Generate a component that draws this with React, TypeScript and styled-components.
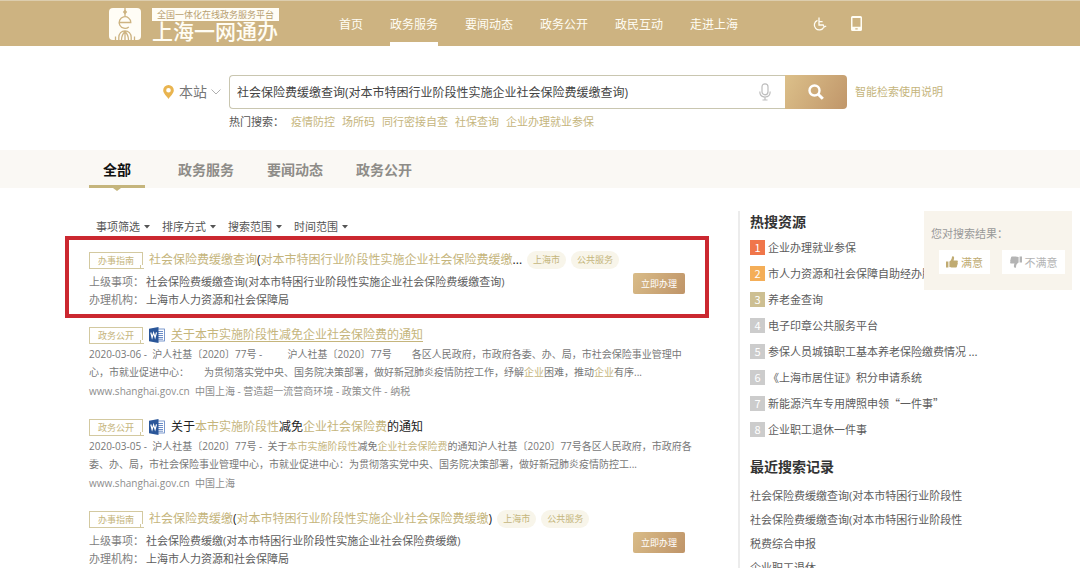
import React from 'react';
import styled, { createGlobalStyle, css } from 'styled-components';

const gold = '#c5b57c';
const bar = '#cdb381';

const GlobalStyle = createGlobalStyle`
  * { box-sizing: border-box; }
  body {
    margin: 0;
    background: #fff;
    color: #6a6a6a;
    font-family: "Open Sans", "Noto Sans CJK SC", sans-serif;
    font-size: 11px;
    line-height: 18px;
  }
  a { color: inherit; text-decoration: none; }
  h1, h2, h3, p, ol, ul, dl, dd { margin: 0; padding: 0; }
  ol, ul { list-style: none; }
  button, input, select { font-family: inherit; }
`;

const Page = styled.div`
  position: relative;
`;

/* header */
const Header = styled.header`
  background: ${bar};
  border-top: 1px solid #dccdae;
  color: #fffdf4;
`;
const HeaderInner = styled.div`
  display: flex;
  align-items: stretch;
  max-width: 902px;
  height: 45px;
  margin: 0 auto;
  padding: 0 129px 0 20px;
`;
const Brand = styled.a`
  display: flex;
  align-items: flex-start;
  gap: 11px;
  padding-top: 7px;
`;
const BrandText = styled.span`
  display: flex;
  flex-direction: column;
`;
const Slogan = styled.span`
  padding: 0 5px;
  background: #fffdf6;
  color: #b8a070;
  font-size: 9px;
  line-height: 13px;
  white-space: nowrap;
`;
const BrandName = styled.span`
  font-size: 21px;
  font-weight: 500;
  line-height: 20px;
  white-space: nowrap;
`;
const Nav = styled.nav`
  display: flex;
  gap: 27px;
  margin-left: 60px;
`;
const NavLink = styled.a<{ $active?: boolean }>`
  padding-top: 15px;
  border-bottom: 4px solid ${p => (p.$active ? '#fff' : 'transparent')};
  font-size: 12px;
  white-space: nowrap;
`;
const HeaderTools = styled.div`
  display: flex;
  align-items: center;
  gap: 24px;
  margin-left: auto;
`;
const IconButton = styled.button`
  display: flex;
  padding: 0;
  border: 0;
  background: none;
  color: inherit;
`;

/* search */
const SearchArea = styled.section`
  max-width: 902px;
  margin: 0 auto;
  padding: 29px 0 19px 74px;
`;
const SearchRow = styled.form`
  display: flex;
  align-items: center;
`;
const Scope = styled.label`
  display: flex;
  align-items: center;
  width: 66px;
`;
const PlainSelect = styled.select<{ $size: number }>`
  appearance: none;
  padding: 0;
  border: 0;
  background: none;
  color: ${p => (p.$size > 11 ? '#777' : '#555')};
  font-size: ${p => p.$size}px;
  line-height: 18px;
`;
const ScopeSelect = styled(PlainSelect)`
  margin: 0 4px 0 5px;
`;
const SearchBox = styled.div`
  display: flex;
  flex: 0 1 618px;
  height: 34px;
`;
const Field = styled.div`
  display: flex;
  flex: 1;
  align-items: center;
  padding: 0 14px 0 7px;
  border: 1px solid #c9c6b0;
  border-right: 0;
  border-radius: 4px 0 0 4px;
`;
const SearchInput = styled.input`
  flex: 1;
  min-width: 0;
  padding: 0;
  border: 0;
  outline: 0;
  background: none;
  color: #444;
  font-size: 12px;
`;
const SearchButton = styled.button`
  display: flex;
  align-items: center;
  justify-content: center;
  width: 62px;
  border: 0;
  border-radius: 0 4px 4px 0;
  background: linear-gradient(120deg, #dcc08a, #c0966a);
`;
const HelpLink = styled.a`
  margin-left: 8px;
  color: ${gold};
  white-space: nowrap;
`;
const HotWords = styled.div`
  display: flex;
  gap: 7px;
  padding: 4px 0 0 66px;
  color: ${gold};
  white-space: nowrap;
`;
const HotLabel = styled.span`
  width: 55px;
  color: #555;
`;

/* tabs */
const TabBand = styled.div`
  background: #faf8f4;
`;
const Tabs = styled.nav`
  display: flex;
  gap: 33px;
  max-width: 902px;
  height: 38px;
  margin: 0 auto;
`;
const Tab = styled.a<{ $active?: boolean }>`
  position: relative;
  padding-top: 11px;
  color: #8e8c88;
  font-size: 14px;
  font-weight: 700;
  white-space: nowrap;
  ${p => p.$active && css`
    padding-right: 14px;
    padding-left: 14px;
    border-bottom: 3px solid ${gold};
    color: #111;
    &::after {
      content: '';
      position: absolute;
      top: 100%;
      left: 50%;
      margin: 3px 0 0 -4px;
      border: 4px solid transparent;
      border-top: 3px solid ${gold};
      border-bottom: 0;
    }
  `}
`;

/* body */
const Body = styled.div`
  display: flex;
  align-items: stretch;
  max-width: 902px;
  margin: 0 auto;
  padding-top: 23px;
`;
const Main = styled.main`
  flex: 1;
  min-width: 0;
  padding: 7px 45px 0 0;
`;
const Filters = styled.div`
  display: flex;
  gap: 11px;
  padding-left: 7px;
`;
const Filter = styled.label`
  display: flex;
  align-items: center;
  gap: 3px;
`;
const Result = styled.article<{ $framed?: boolean }>`
  margin-bottom: 16px;
  ${p => p.$framed && css`
    margin: 0 -16px 7px -24px;
    padding: 10px 12px 5px 20px;
    border: 4px solid #cb2830;
  `}
`;
const ResultHead = styled.div`
  display: flex;
  align-items: center;
  height: 20px;
  white-space: nowrap;
`;
const Tag = styled.span`
  position: relative;
  width: 54px;
  height: 17px;
  margin-right: 6px;
  border: 1px solid #d3c9a0;
  color: ${gold};
  font-size: 9px;
  line-height: 15px;
  text-align: center;
  &::after {
    content: '';
    position: absolute;
    right: -2px;
    bottom: -1px;
    width: 3px;
    height: 3px;
    border-bottom: 1px solid #d3c9a0;
    border-left: 1px solid #d3c9a0;
    background: #fff;
  }
`;
const Title = styled.h3<{ $visited?: boolean }>`
  color: #222;
  font-size: 12px;
  font-weight: 400;
  a { text-decoration: ${p => (p.$visited ? 'underline' : 'none')}; text-underline-offset: 2px; }
  ${p => p.$visited && css`color: ${gold};`}
`;
const Mark = styled.em`
  color: ${gold};
  font-style: normal;
`;
const Chip = styled.span`
  margin-left: 5px;
  padding: 0 6px;
  border-radius: 9px;
  background: #f8f5ea;
  color: ${gold};
  font-size: 9px;
`;
const WordIcon = styled.svg`
  margin-right: 6px;
`;
const ServiceBody = styled.div`
  display: flex;
  align-items: flex-start;
  justify-content: space-between;
  padding: 3px 8px 0 0;
`;
const Facts = styled.dl`
  display: grid;
  grid-template-columns: 57px auto;
  color: #5c5c5c;
  white-space: nowrap;
  dt { color: #808080; }
`;
const ApplyButton = styled.button`
  width: 52px;
  height: 21px;
  padding: 0;
  border: 0;
  border-radius: 2px;
  background: linear-gradient(120deg, #d9bc88, #bf9468);
  color: #fff;
  font-size: 9px;
`;
const Summary = styled.p`
  color: #777;
  font-size: 10px;
  white-space: nowrap;
`;
const Source = styled.p`
  color: #8d8d8d;
  font-size: 10px;
  line-height: 20px;
`;

/* side column */
const Side = styled.aside`
  width: 253px;
  padding-left: 10px;
  border-left: 2px solid #ececec;
`;
const SideTitle = styled.h2`
  padding-bottom: 2px;
  color: #333;
  font-size: 14px;
  font-weight: 700;
  line-height: 21px;
`;
const HotList = styled.ol`
  padding-bottom: 14px;
`;
const HotItem = styled.li`
  display: flex;
  align-items: center;
  gap: 3px;
  height: 26px;
  color: #5c5c5c;
  font-family: "Noto Sans CJK SC", sans-serif;
  white-space: nowrap;
`;
const Rank = styled.span<{ $color: string }>`
  width: 15px;
  height: 15px;
  background: ${p => p.$color};
  color: #fff;
  line-height: 15px;
  text-align: center;
`;
const RecentList = styled.ul`
  padding-top: 5px;
  color: #5c5c5c;
  line-height: 24px;
  white-space: nowrap;
`;

/* feedback card floating over the side column */
const Feedback = styled.section`
  position: absolute;
  top: 211px;
  right: 8px;
  width: 148px;
  padding: 14px 7px 16px;
  background: #f8f4ec;
  color: #999;
`;
const Votes = styled.div`
  display: flex;
  gap: 12px;
  padding: 7px 0 0 8px;
`;
const Vote = styled.button<{ $up?: boolean }>`
  display: flex;
  align-items: center;
  justify-content: center;
  gap: 3px;
  width: ${p => (p.$up ? 51 : 63)}px;
  height: 24px;
  padding: 0;
  border: 0;
  background: #fff;
  color: ${p => (p.$up ? '#c0ab72' : '#b4b4b4')};
  font-size: 11px;
  white-space: nowrap;
`;
const Flip = styled.svg`
  transform: rotate(180deg);
`;

const Caret = () => (
  <svg width="8" height="4" viewBox="0 0 8 4" aria-hidden="true"><path d="M1 0h6L4 3.6z" fill="#555" /></svg>
);

const thumbPath = 'M0 5.5h2.4v6H0zM3.4 5.6C5 4.600 5.900 3 6 .8c.1-.9 1.900-.8 2.100.8.1 1-.2 2-.6 3h3.300c1.100 0 1.400 1.200.7 1.800.6.500.5 1.400-.2 1.700.5.6.2 1.400-.4 1.600.3.800-.1 1.800-1.100 1.800H6.200c-1.200 0-1.700-.5-2.800-.6z';

const Word = () => (
  <WordIcon width="16" height="16" viewBox="0 0 16 16" role="img" aria-label="Word">
    <rect x="8" y="2" width="7.500" height="12" fill="#fff" stroke="#5a7fc0" strokeWidth=".8" />
    <path d="M9 4.500h5M9 6.500h5M9 8.500h5M9 10.500h5M9 12.200h5" stroke="#5a7fc0" strokeWidth=".9" />
    <path d="M0 1.800 9.500 0v16L0 14.200z" fill="#2a5699" />
    <path d="m1.800 5.500 1.300 5 1.500-4.600 1.500 4.600 1.400-5.200" fill="none" stroke="#fff" strokeWidth="1.200" />
  </WordIcon>
);

const Logo = () => (
  <svg width="32" height="32" viewBox="0 0 32 32" aria-hidden="true">
    <rect width="32" height="32" rx="4" fill="#fffdf6" />
    <path d="M16 1.500 18.200 4 16 6.500 13.800 4z" fill={bar} />
    <g fill="none" stroke={bar} strokeWidth="1.300">
      <path d="M16 0v8" />
      <path d="M10.200 14.500H21.800A5.800 5.800 0 1 0 19.800 18.900" />
      <path d="M16 22.500V32M9.800 32v-2.500c0-4 2.700-6.700 6.200-6.700s6.200 2.700 6.200 6.700V32M12.500 32c0-3 1-6 3.500-8.500 2.500 2.500 3.500 5.500 3.500 8.500M6.500 28.500V32M25.500 28.500V32" />
    </g>
  </svg>
);

const filters = ['事项筛选', '排序方式', '搜索范围', '时间范围'];
const hotWords = ['疫情防控', '场所码', '同行密接自查', '社保查询', '企业办理就业参保'];
const rankColors = ['#f0764a', '#f4ae58', '#cdbf92'];
const hot = [
  '企业办理就业参保',
  '市人力资源和社会保障自助经办服务',
  '养老金查询',
  '电子印章公共服务平台',
  '参保人员城镇职工基本养老保险缴费情况 ...',
  '《上海市居住证》积分申请系统',
  '新能源汽车专用牌照申领“一件事”',
  '企业职工退休一件事',
];
const recent = [
  '社会保险费缓缴查询(对本市特困行业阶段性',
  '社会保险费缓缴查询(对本市特困行业阶段性',
  '税费综合申报',
  '企业职工退休',
];

function ServiceResult({ title, item, framed }: { title: React.ReactNode; item: string; framed?: boolean }) {
  return (
    <Result $framed={framed}>
      <ResultHead>
        <Tag>办事指南</Tag>
        <Title><a href="#item">{title}</a></Title>
        <Chip>上海市</Chip>
        <Chip>公共服务</Chip>
      </ResultHead>
      <ServiceBody>
        <Facts>
          <dt>上级事项：</dt><dd>{item}</dd>
          <dt>办理机构：</dt><dd>上海市人力资源和社会保障局</dd>
        </Facts>
        <ApplyButton type="button">立即办理</ApplyButton>
      </ServiceBody>
    </Result>
  );
}

function DocumentResult({ title, source, visited, children }: {
  title: React.ReactNode; source: string; visited?: boolean; children: React.ReactNode;
}) {
  return (
    <Result>
      <ResultHead>
        <Tag>政务公开</Tag>
        <Word />
        <Title $visited={visited}><a href="#document">{title}</a></Title>
      </ResultHead>
      <Summary>{children}</Summary>
      <Source>www.shanghai.gov.cn&nbsp; {source}</Source>
    </Result>
  );
}

export default function App() {
  return (
    <Page>
      <GlobalStyle />
      <Header>
        <HeaderInner>
          <Brand href="#home">
            <Logo />
            <BrandText>
              <Slogan>全国一体化在线政务服务平台</Slogan>
              <BrandName>上海一网通办</BrandName>
            </BrandText>
          </Brand>
          <Nav>
            {['首页', '政务服务', '要闻动态', '政务公开', '政民互动', '走进上海'].map(n => (
              <NavLink key={n} href="#nav" $active={n === '政务服务'}>{n}</NavLink>
            ))}
          </Nav>
          <HeaderTools>
            <IconButton type="button" aria-label="无障碍">
              <svg width="14" height="14" viewBox="0 0 14 14" fill="none" stroke="currentColor" strokeWidth="1.300">
                <path d="M4.500 3.300A5 5 0 1 0 10.800 10.200" />
                <path d="M6 .5v7.500h4.200l1 2 2-1M6 4.600h3.600" />
              </svg>
            </IconButton>
            <IconButton type="button" aria-label="移动端">
              <svg width="11" height="15" viewBox="0 0 11 15">
                <path fillRule="evenodd" fill="currentColor" d="M1.500 0h8A1.500 1.500 0 0 1 11 1.500v12A1.500 1.500 0 0 1 9.500 15h-8A1.500 1.500 0 0 1 0 13.500v-12A1.500 1.500 0 0 1 1.500 0zm0 2v8.800h8V2zM4.300 12.300v1.200h2.400v-1.200z" />
              </svg>
            </IconButton>
          </HeaderTools>
        </HeaderInner>
      </Header>

      <SearchArea>
        <SearchRow onSubmit={e => e.preventDefault()}>
          <Scope>
            <svg width="11" height="14" viewBox="0 0 11 14" aria-hidden="true">
              <path fillRule="evenodd" fill="#e9b44f" d="M5.500 0A5.300 5.300 0 0 1 10.800 5.300C10.800 8.500 7.500 11 5.500 14 3.500 11 .2 8.500.2 5.300A5.300 5.300 0 0 1 5.500 0zm0 3a2.300 2.300 0 1 0 0 4.600 2.300 2.300 0 0 0 0-4.600z" />
            </svg>
            <ScopeSelect $size={14} aria-label="搜索站点"><option>本站</option></ScopeSelect>
            <svg width="10" height="6" viewBox="0 0 10 6" fill="none" stroke="#b0b0b0" aria-hidden="true"><path d="m.5.5 4.500 4.500L9.500.5" /></svg>
          </Scope>
          <SearchBox>
            <Field>
              <SearchInput aria-label="搜索内容" defaultValue="社会保险费缓缴查询(对本市特困行业阶段性实施企业社会保险费缓缴查询)" />
              <IconButton type="button" aria-label="语音输入">
                <svg width="12" height="18" viewBox="0 0 12 18" fill="none" stroke="#bdbdbd" strokeWidth="1.200">
                  <rect x="3" y=".8" width="6" height="11" rx="3" />
                  <path d="M.8 8.500c0 3.500 2 5.500 5.200 5.500s5.200-2 5.200-5.500M6 14v3M3.500 17h5" />
                </svg>
              </IconButton>
            </Field>
            <SearchButton aria-label="搜索">
              <svg width="16" height="16" viewBox="0 0 16 16" fill="none" stroke="#fff">
                <circle cx="6.500" cy="6.500" r="5" strokeWidth="2.400" />
                <path d="m10.200 10.200 4.600 4.600" strokeWidth="3" />
              </svg>
            </SearchButton>
          </SearchBox>
          <HelpLink href="#help">智能检索使用说明</HelpLink>
        </SearchRow>
        <HotWords>
          <HotLabel>热门搜索：</HotLabel>
          {hotWords.map(w => <a key={w} href="#hot">{w}</a>)}
        </HotWords>
      </SearchArea>

      <TabBand>
        <Tabs>
          {['全部', '政务服务', '要闻动态', '政务公开'].map((t, i) => (
            <Tab key={t} href="#tab" $active={i === 0}>{t}</Tab>
          ))}
        </Tabs>
      </TabBand>

      <Body>
        <Main>
          <Filters>
            {filters.map(f => (
              <Filter key={f}>
                <PlainSelect $size={11} aria-label={f}><option>{f}</option></PlainSelect>
                <Caret />
              </Filter>
            ))}
          </Filters>

          <ServiceResult
            framed
            title={<><Mark>社会保险费缓缴查询</Mark>(<Mark>对本市特困行业阶段性实施企业社会保险费缓缴</Mark>...</>}
            item="社会保险费缓缴查询(对本市特困行业阶段性实施企业社会保险费缓缴查询)"
          />
          <DocumentResult visited title="关于本市实施阶段性减免企业社会保险费的通知" source="中国上海 - 营造超一流营商环境 - 政策文件 - 纳税">
            2020-03-06 -&nbsp; 沪人社基〔2020〕77号 -&nbsp; 　　沪人社基〔2020〕77号　　各区人民政府，市政府各委、办、局，市社会保险事业管理中
            <br />
            心，市就业促进中心：　　为贯彻落实党中央、国务院决策部署，做好新冠肺炎疫情防控工作，纾解<Mark>企业</Mark>困难，推动<Mark>企业</Mark>有序...
          </DocumentResult>
          <DocumentResult
            title={<>关于<Mark>本市实施阶段性</Mark>减免<Mark>企业社会保险费</Mark>的通知</>}
            source="中国上海"
          >
            2020-03-05 -&nbsp; 沪人社基〔2020〕77号 -&nbsp; 关于<Mark>本市实施阶段性</Mark>减免<Mark>企业社会保险费</Mark>的通知沪人社基〔2020〕77号各区人民政府，市政府各
            <br />
            委、办、局，市社会保险事业管理中心，市就业促进中心：为贯彻落实党中央、国务院决策部署，做好新冠肺炎疫情防控工...
          </DocumentResult>
          <ServiceResult
            title={<><Mark>社会保险费缓缴</Mark>(<Mark>对本市特困行业阶段性实施企业社会保险费缓缴</Mark>)</>}
            item="社会保险费缓缴(对本市特困行业阶段性实施企业社会保险费缓缴)"
          />
        </Main>

        <Side>
          <SideTitle>热搜资源</SideTitle>
          <HotList>
            {hot.map((h, i) => (
              <HotItem key={h}>
                <Rank $color={rankColors[i] || '#cccccc'}>{i + 1}</Rank>
                <a href="#resource">{h}</a>
              </HotItem>
            ))}
          </HotList>
          <SideTitle>最近搜索记录</SideTitle>
          <RecentList>
            {recent.map((r, i) => <li key={i}><a href="#recent">{r}</a></li>)}
          </RecentList>
        </Side>
      </Body>

      <Feedback>
        <p>您对搜索结果：</p>
        <Votes>
          <Vote type="button" $up>
            <svg width="12" height="12" viewBox="0 0 12 12" fill="currentColor" aria-hidden="true"><path d={thumbPath} /></svg>
            满意
          </Vote>
          <Vote type="button">
            <Flip width="12" height="12" viewBox="0 0 12 12" fill="currentColor" aria-hidden="true"><path d={thumbPath} /></Flip>
            不满意
          </Vote>
        </Votes>
      </Feedback>
    </Page>
  );
}
